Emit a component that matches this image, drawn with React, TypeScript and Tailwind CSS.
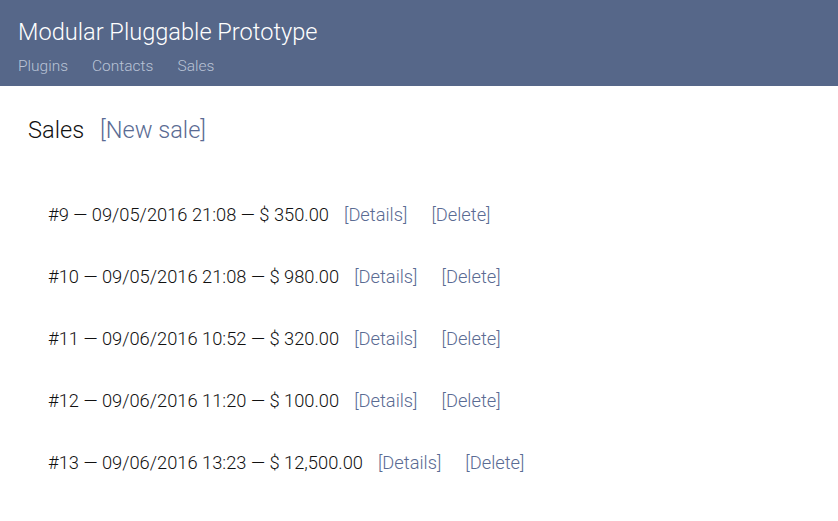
const sales = [
  { id: 9, date: "09/05/2016 21:08", total: "350.00" },
  { id: 10, date: "09/05/2016 21:08", total: "980.00" },
  { id: 11, date: "09/06/2016 10:52", total: "320.00" },
  { id: 12, date: "09/06/2016 11:20", total: "100.00" },
  { id: 13, date: "09/06/2016 13:23", total: "12,500.00" },
];

export default function App() {
  return (
    <div className="min-h-[521px] bg-white font-['Roboto',sans-serif] font-light">
      <header className="h-[86px] bg-[#566789] px-[18px] pt-[16px]">
        <h1 className="text-[23.6px] leading-[32px] text-white">Modular Pluggable Prototype</h1>
        <nav className="mt-[8px] flex gap-[24px] text-[15.5px] leading-[20px] text-[#b9c3d6]">
          <a>Plugins</a>
          <a>Contacts</a>
          <a>Sales</a>
        </nav>
      </header>
      <main className="px-[28px] pt-[28px]">
        <div className="flex items-baseline gap-[16px] text-[23.6px] leading-[32px]">
          <h2 className="text-[#111]">Sales</h2>
          <a className="text-[#5a6b93]">[New sale]</a>
        </div>
        <ul className="mt-[57px] flex flex-col gap-[38px] pl-[20px]">
          {sales.map((s) => (
            <li key={s.id} className="flex gap-[15px] text-[18.3px] leading-[24px] text-[#111]">
              <span>
                #{s.id} — {s.date} — $ {s.total}
              </span>
              <a className="text-[#5a6b93]">[Details]</a>
              <a className="ml-[9px] text-[#5a6b93]">[Delete]</a>
            </li>
          ))}
        </ul>
      </main>
    </div>
  );
}
